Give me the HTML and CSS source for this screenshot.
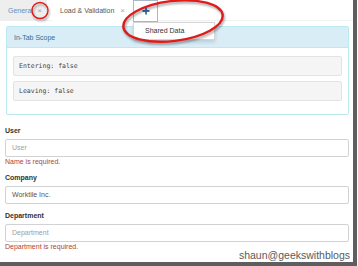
FILE: index.html
```html
<!DOCTYPE html>
<html>
<head>
<meta charset="utf-8">
<link rel="stylesheet" href="styles.css">
</head>
<body>
<div class="frame">
  <ul class="tabs">
    <li class="tab inactive"><span class="tab-title">General</span><span class="close">×</span></li>
    <li class="tab active"><span class="tab-title">Load &amp; Validation</span><span class="close">×</span></li>
    <li class="tab add">
      <svg class="plus" width="8" height="8" viewBox="0 0 8 8"><path d="M4 0.5V7.5M0.5 4H7.5" stroke="#2f6fb0" stroke-width="1.8" fill="none"/></svg>
      <div class="menu"><span class="menu-item">Shared Data</span></div>
    </li>
  </ul>

  <div class="panel">
    <div class="panel-heading">In-Tab Scope</div>
    <div class="panel-body">
      <div class="well">Entering: false</div>
      <div class="well">Leaving: false</div>
    </div>
  </div>

  <form class="form">
    <div class="group">
      <label class="label">User</label>
      <div class="input placeholder">User</div>
      <div class="error">Name is required.</div>
    </div>
    <div class="group">
      <label class="label">Company</label>
      <div class="input">Worktile Inc.</div>
    </div>
    <div class="group">
      <label class="label">Department</label>
      <div class="input placeholder">Department</div>
      <div class="error">Department is required.</div>
    </div>
  </form>

  <div class="watermark">shaun@geekswithblogs</div>

  <svg class="mark mark-circle" width="22" height="22" viewBox="0 0 22 22">
    <ellipse cx="11" cy="10.5" rx="8" ry="8" fill="none" stroke="#e21a1a" stroke-width="1.4"/>
  </svg>
  <svg class="mark mark-ellipse" width="114" height="50" viewBox="0 0 114 50">
    <ellipse cx="56" cy="23" rx="50" ry="20" transform="rotate(-7 56 23)" fill="none" stroke="#e21a1a" stroke-width="2.4"/>
  </svg>
</div>
</body>
</html>
```

FILE: styles.css
```css
* { box-sizing: border-box; }
html, body { margin: 0; padding: 0; background: #fff; }
body {
  font-family: "Liberation Sans", Arial, sans-serif;
  font-size: 7px;
  color: #333;
}
.frame {
  position: relative;
  width: 357px;
  height: 266px;
  background: #fff;
  border-right: 4px solid #5e5e5e;
  border-bottom: 4px solid #5e5e5e;
  overflow: hidden;
}
.tabs {
  list-style: none;
  margin: 0;
  padding: 0;
  display: flex;
  height: 21px;
  border-bottom: 1px solid #f2f2f2;
}
.tab {
  position: relative;
  display: flex;
  align-items: center;
  height: 21px;
  line-height: 10px;
}
.tab.inactive {
  background: #eeeeee;
  padding: 0 5px 0 8px;
  width: 47px;
  color: #6d8db3;
  margin-right: 5px;
}
.tab.active {
  background: #fff;
  padding: 0 6px 0 8px;
  color: #555;
  width: 79px;
  margin-right: 2px;
}
.close {
  color: #a5a5a5;
  font-size: 8px;
  margin-left: auto;
}
.tab.add {
  width: 25px;
  height: 22px;
  border: 1px solid #a9b9cb;
  justify-content: center;
  background: #fff;
}
.plus { display: block; }
.menu {
  position: absolute;
  top: 21px;
  left: -1px;
  width: 82px;
  height: 18px;
  background: #fff;
  border: 1px solid #d5d5d5;
  box-shadow: 0 2px 4px rgba(0,0,0,0.15);
  display: flex;
  align-items: center;
  padding-left: 11px;
  z-index: 2;
}
.menu-item { color: #333; font-size: 7px; }

.panel {
  margin: 5px 4px 0 6px;
  border: 1px solid #bce8f1;
  border-radius: 2px;
}
.panel-heading {
  background: #d9edf7;
  color: #31708f;
  height: 21px;
  line-height: 21px;
  padding-left: 7px;
  border-bottom: 1px solid #bce8f1;
}
.panel-body {
  padding: 8px 6px 8px 6px;
}
.well {
  background: #f5f5f5;
  border: 1px solid #e3e3e3;
  border-radius: 2px;
  height: 20px;
  line-height: 18px;
  padding-left: 5px;
  margin-bottom: 5px;
  font-family: "DejaVu Sans Mono", "Liberation Mono", monospace;
  font-size: 6.5px;
  color: #444;
}

.form {
  padding: 11px 4px 0 5px;
  margin: 0;
}
.group {
  margin-bottom: 7px;
}
.label {
  display: block;
  font-weight: bold;
  line-height: 10px;
  margin-bottom: 3px;
  color: #333;
}
.input {
  height: 18px;
  border: 1px solid #d2d2d2;
  border-radius: 2px;
  line-height: 16px;
  padding-left: 6px;
  color: #555;
}
.input.placeholder { color: #a0a0a0; }
.error {
  color: #a94442;
  line-height: 9px;
}
.watermark {
  position: absolute;
  right: 3px;
  bottom: 0px;
  font-size: 10.5px;
  line-height: 14px;
  color: #5a5a5a;
}
.mark {
  position: absolute;
  filter: drop-shadow(1px 2px 1px rgba(0,0,0,0.35));
  z-index: 3;
}
.mark-circle { left: 29px; top: 0px; }
.mark-ellipse { left: 117px; top: -2px; }
```
